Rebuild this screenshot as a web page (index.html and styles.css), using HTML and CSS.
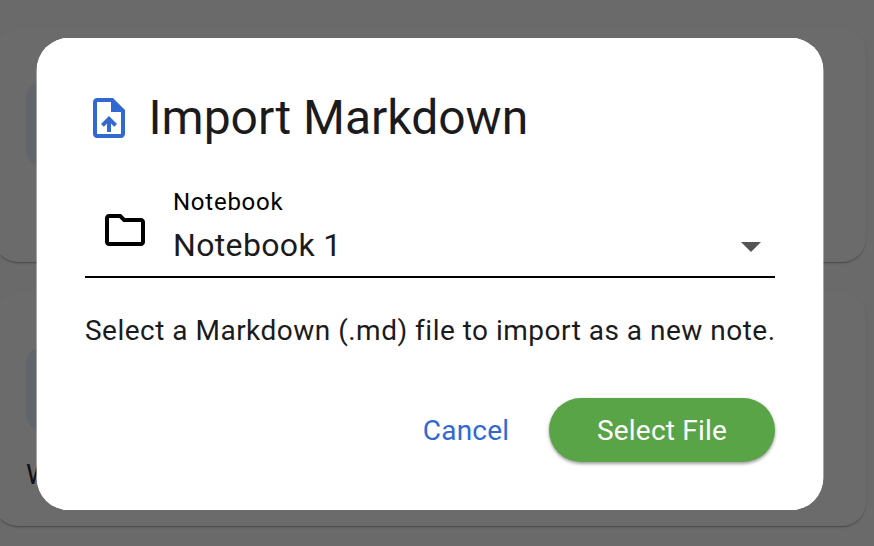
FILE: index.html
```html
<!DOCTYPE html>
<html lang="en">
<head>
<meta charset="utf-8">
<title>Import Markdown</title>
<link rel="stylesheet" href="styles.css">
</head>
<body>
<main class="page">
  <section class="card"><div class="tile"></div></section>
  <section class="card"><div class="tile"></div><p class="card-title">W</p></section>
</main>
<div class="scrim">
  <div class="dialog" role="dialog" aria-labelledby="title">
    <header class="head">
      <svg class="head-icon" viewBox="0 0 24 24"><path fill-rule="evenodd" d="M6 2H14L20 8V20C20 21.1 19.1 22 18 22H6C4.9 22 4 21.1 4 20V4C4 2.9 4.9 2 6 2ZM6 4V20H18V9H13V4Z"/><path d="M12 11 16 15 14.6 16.4 13 14.8V19H11V14.8L9.4 16.4 8 15Z"/></svg>
      <h1 id="title">Import Markdown</h1>
    </header>
    <div class="field">
      <svg class="folder" viewBox="0 0 24 24"><path d="M9.17 6l2 2H20v10H4V6h5.17M10 4H4c-1.1 0-1.99.9-1.99 2L2 18c0 1.1.9 2 2 2h16c1.1 0 2-.9 2-2V8c0-1.1-.9-2-2-2h-8l-2-2z"/></svg>
      <div class="select">
        <span class="label">Notebook</span>
        <span class="value">Notebook 1</span>
      </div>
      <svg class="arrow" viewBox="0 0 24 24"><path d="M7 10l5 5 5-5z"/></svg>
    </div>
    <p class="hint">Select a Markdown (.md) file to import as a new note.</p>
    <footer class="actions">
      <button class="cancel">Cancel</button>
      <button class="primary">Select File</button>
    </footer>
  </div>
</div>
</body>
</html>
```
FILE: styles.css
```css
* { box-sizing: border-box; }
body {
  margin: 0;
  height: 546px;
  overflow: hidden;
  background: #6a6a6a;
  font-family: Roboto, sans-serif;
  color: #1b1b1d;
}
h1, p { margin: 0; font-weight: 400; }
.page {
  display: flex;
  flex-direction: column;
  gap: 30px;
  padding: 28px 8px 0 0;
  margin-left: -6px;
}
.card {
  height: 234px;
  flex: none;
  padding: 54px 32px 0;
  border-radius: 24px;
  background: #6b6b6b;
  box-shadow: 0 2px 2px -1px rgba(0, 0, 0, .26), 0 1px 2px rgba(0, 0, 0, .1);
}
.tile {
  width: 84px;
  height: 84px;
  border-radius: 16px;
  background: #60666c;
}
.card-title {
  margin-top: 25px;
  font-size: 28px;
  line-height: 40px;
  color: #111;
}
.card + .card .tile { margin-top: 1px; }
.card + .card .card-title { margin-top: 24px; }
.scrim {
  position: absolute;
  inset: 0;
  padding: 38px 51px 36px 37px;
}
.dialog {
  height: 472px;
  padding: 48px;
  border-radius: 32px;
  background: #fff;
  box-shadow: 0.4px 0 0 #fff, -0.4px 0 0 #fff;
}
.head {
  display: flex;
  align-items: center;
  gap: 15.5px;
  height: 64px;
}
.head-icon { width: 48px; height: 48px; fill: #3169d0; }
h1 { font-size: 48px; line-height: 64px; white-space: nowrap; }
.field {
  display: flex;
  height: 112px;
  margin-top: 16px;
  padding: 0 0 12px 16px;
  border-bottom: 2px solid #000;
}
.folder { width: 48px; height: 48px; margin-top: 40px; }
.select {
  display: flex;
  flex-direction: column;
  flex: 1;
  margin-left: 24px;
  padding-top: 20px;
}
.label { font-size: 24px; line-height: 32px; letter-spacing: .75px; color: #000; }
.value { font-size: 32px; line-height: 48px; letter-spacing: .35px; margin-top: 3px; }
.arrow { width: 48px; height: 48px; margin-top: 56px; fill: #555; }
.hint {
  margin-top: 33px;
  font-size: 28px;
  line-height: 40px;
  letter-spacing: .49px;
  white-space: nowrap;
}
.actions {
  display: flex;
  justify-content: flex-end;
  gap: 16px;
  margin-top: 47px;
}
button {
  height: 64px;
  border: 0;
  border-radius: 32px;
  padding: 2px 0 0;
  font: 400 28px/40px Roboto, sans-serif;
  letter-spacing: .2px;
}
.cancel { width: 134px; background: none; color: #3169d0; }
.primary {
  width: 226px;
  background: #58a447;
  color: #fff;
  box-shadow: 0 2px 3px rgba(0, 0, 0, .3), 0 1px 5px rgba(0, 0, 0, .12);
}
```
